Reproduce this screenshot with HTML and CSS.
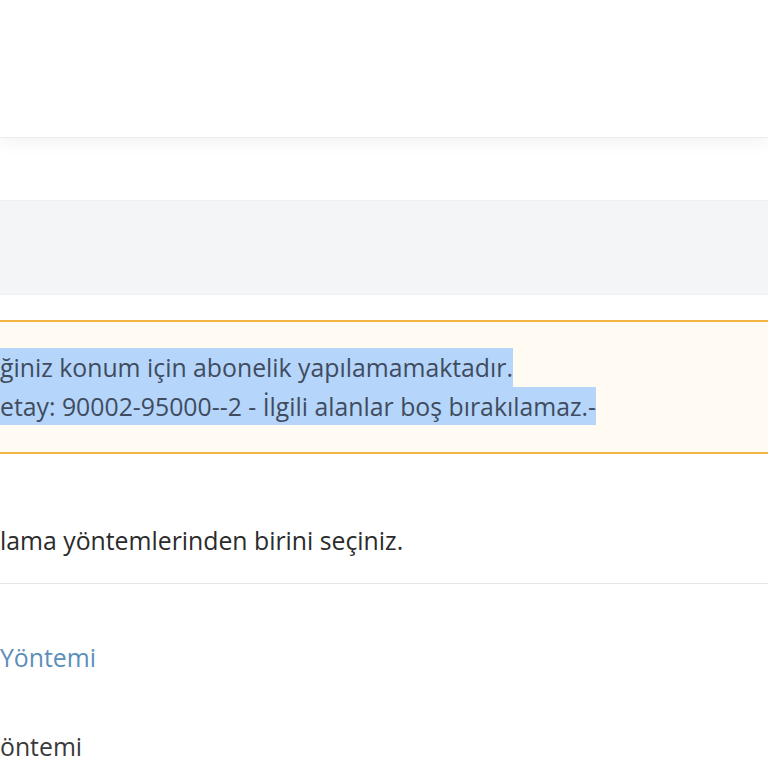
FILE: index.html
```html
<!DOCTYPE html>
<html>
	<head>
		<meta charset="UTF-8">
		<title>Abonelik</title>
		<link rel="stylesheet" href="styles.css">
	</head>
	<body>
		<div class="header"></div>
		<div class="steps"></div>
		<div class="alert">
			<div class="sel">ğiniz konum için abonelik yapılamamaktadır. </div>
			<div class="sel">etay: 90002-95000--2 - İlgili alanlar boş bırakılamaz.-</div>
		</div>
		<div class="intro">lama yöntemlerinden birini seçiniz.</div>
		<div class="methods">
			<div class="method active">Yöntemi</div>
			<div class="method">öntemi</div>
		</div>
	</body>
</html>
```
FILE: styles.css
```css
*{
	padding: 0;
	margin: 0;
	box-sizing: border-box;
}
body{
	background: #fff;
	font-family: "Open Sans", "Noto Sans", sans-serif;
	font-size: 24.8px;
	color: #333;
	overflow: hidden;
}
.header{
	height: 137px;
	background: #fff;
	box-shadow: 0 1px 0 #ececec, 0 6px 16px rgba(0,0,0,0.05);
}
.steps{
	margin-top: 63px;
	height: 95px;
	background: #f4f5f7;
	border-top: 1px solid #eef0f3;
	border-bottom: 1px solid #eef0f3;
}
.alert{
	margin-top: 25px;
	background: #fffbf3;
	border-top: 2px solid #f2b441;
	border-bottom: 2px solid #f2b441;
	padding: 26px 0 27px 0;
	color: #404c5e;
}
.sel{
	width: fit-content;
	background: #b5d5fb;
	line-height: 38.5px;
}
.intro{
	height: 130px;
	line-height: 30px;
	padding-top: 71px;
	border-bottom: 1px solid #e6e6e6;
	color: #2b2b2b;
}
.method{
	height: 89px;
	line-height: 30px;
	padding-top: 58px;
	color: #3a3a3a;
}
.method + .method{
	padding-top: 58px;
}
.active{
	color: #5a8fbb;
}
```
